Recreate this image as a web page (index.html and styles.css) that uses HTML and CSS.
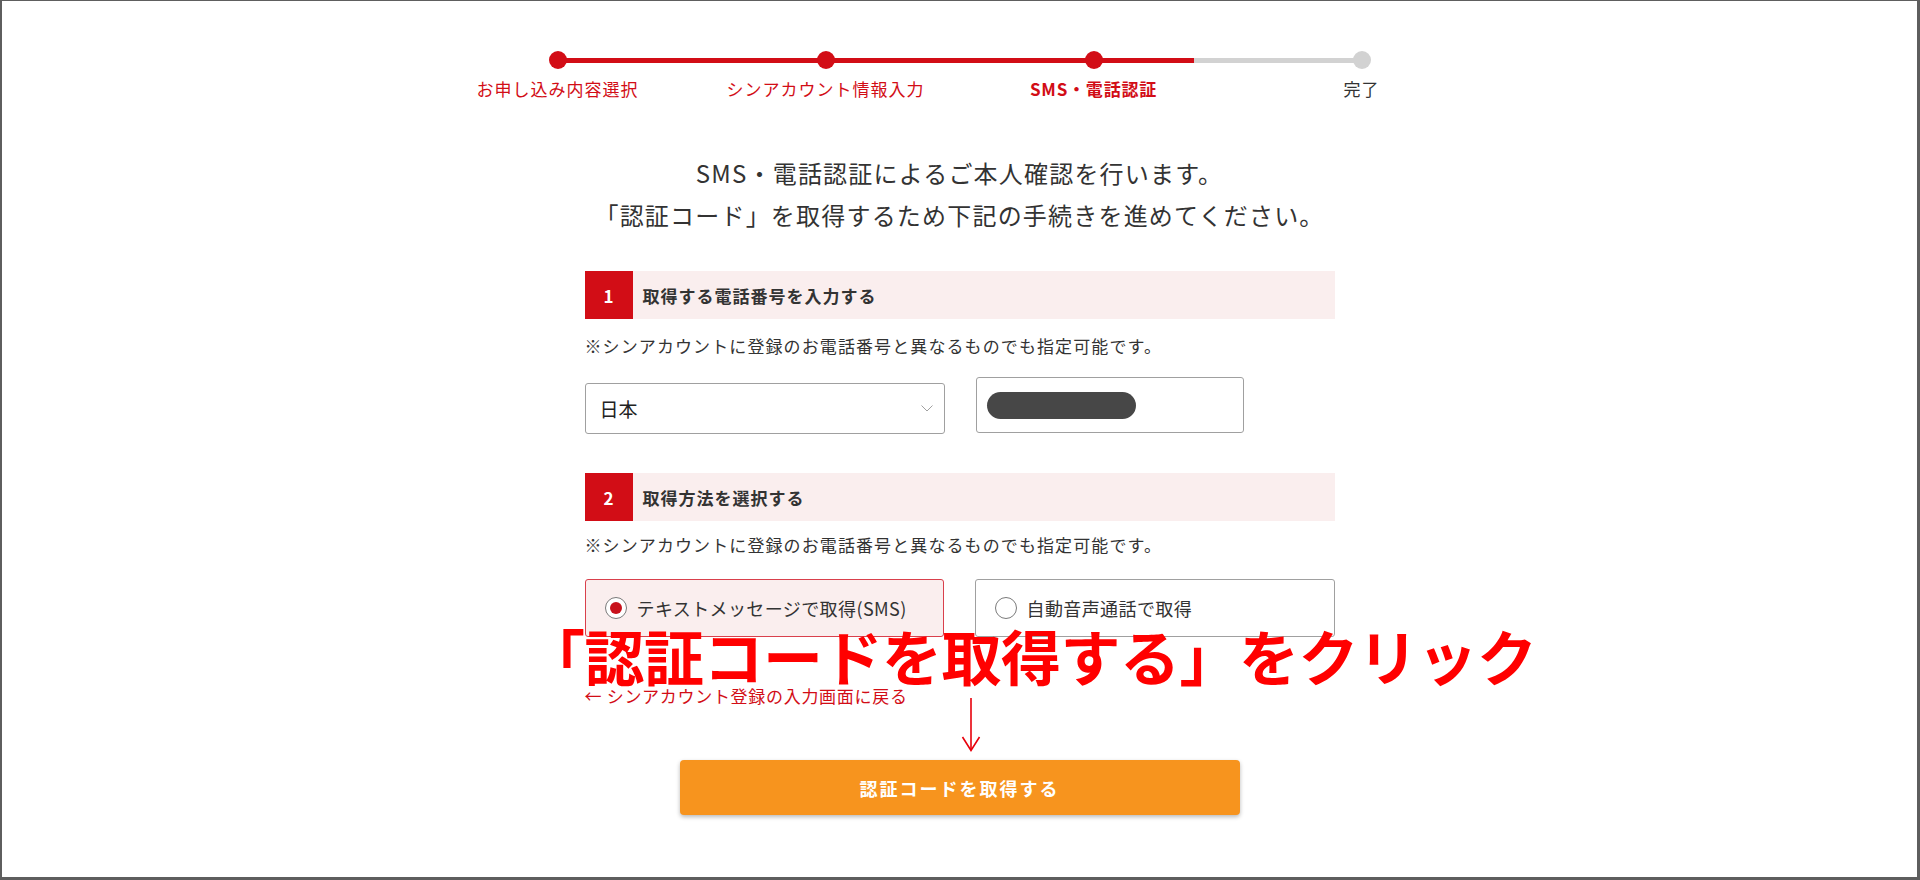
FILE: index.html
```html
<!DOCTYPE html>
<html lang="ja">
<head>
<meta charset="utf-8">
<title>SMS・電話認証</title>
<link rel="stylesheet" href="styles.css">
</head>
<body>
<div class="page">
  <div class="stepper">
    <div class="track"><div class="fill"></div></div>
    <div class="step done">
      <span class="dot"></span>
      <span class="label">お申し込み内容選択</span>
    </div>
    <div class="step done">
      <span class="dot"></span>
      <span class="label">シンアカウント情報入力</span>
    </div>
    <div class="step current">
      <span class="dot"></span>
      <span class="label">SMS・電話認証</span>
    </div>
    <div class="step todo">
      <span class="dot"></span>
      <span class="label">完了</span>
    </div>
  </div>

  <p class="intro">SMS・電話認証によるご本人確認を行います。<br>「認証コード」を取得するため下記の手続きを進めてください。</p>

  <div class="content">
    <div class="sec-head">
      <span class="num">1</span>
      <span class="title">取得する電話番号を入力する</span>
    </div>
    <p class="note">※シンアカウントに登録のお電話番号と異なるものでも指定可能です。</p>
    <div class="fields">
      <div class="select">
        <span>日本</span>
        <svg class="chev" width="12" height="7" viewBox="0 0 12 7"><polyline points="0.5,0.5 6,6 11.5,0.5" fill="none" stroke="#a0a0a0" stroke-width="1"/></svg>
      </div>
      <div class="phone"><span class="pill"></span></div>
    </div>

    <div class="sec-head sec2">
      <span class="num">2</span>
      <span class="title">取得方法を選択する</span>
    </div>
    <p class="note note2">※シンアカウントに登録のお電話番号と異なるものでも指定可能です。</p>
    <div class="radios">
      <label class="radio selected"><span class="circle"><span class="inner"></span></span><span class="rtext">テキストメッセージで取得(SMS)</span></label>
      <label class="radio wide"><span class="circle"></span><span class="rtext">自動音声通話で取得</span></label>
    </div>

    <a class="back">← シンアカウント登録の入力画面に戻る</a>

    <div class="btn">認証コードを取得する</div>
  </div>

  <div class="annot">「認証コードを取得する」をクリック</div>
  <svg class="arrow" width="20" height="54" viewBox="0 0 20 54"><line x1="10" y1="0" x2="10" y2="52" stroke="#e8000b" stroke-width="1.6"/><polyline points="1.5,39 10,52.5 18.5,39" fill="none" stroke="#e8000b" stroke-width="1.6"/></svg>
</div>
</body>
</html>
```

FILE: styles.css
```css
html, body {
  margin: 0;
  padding: 0;
  background: #fff;
}

.page {
  position: relative;
  width: 1920px;
  height: 880px;
  box-sizing: border-box;
  border-style: solid;
  border-color: #5e5e5e;
  border-width: 1px 3px 3px 2px;
  font-family: "Noto Sans CJK JP", "Noto Sans", sans-serif;
  color: #333;
  overflow: hidden;
}

/* stepper */
.stepper {
  position: relative;
  width: 1072px;
  margin: 50px auto 0;
  display: grid;
  grid-template-columns: repeat(4, 268px);
}

.track {
  position: absolute;
  top: 7px;
  left: 134px;
  right: 134px;
  height: 5px;
  background: #d2d2d2;
}

.fill {
  width: 636px;
  height: 100%;
  background: #d20d16;
}

.step {
  display: flex;
  flex-direction: column;
  align-items: center;
}

.dot {
  position: relative;
  z-index: 1;
  width: 18px;
  height: 18px;
  border-radius: 50%;
  background: #d20d16;
}

.todo .dot {
  background: #d2d2d2;
}

.label {
  margin-top: 8px;
  font-size: 17px;
  line-height: 24px;
  letter-spacing: 1px;
  color: #d20d16;
}

.current .label {
  font-weight: 700;
  letter-spacing: 0.8px;
}

.todo .label {
  color: #333;
}

/* intro */
.intro {
  margin: 51px 0 0;
  text-align: center;
  font-size: 24px;
  line-height: 42px;
  letter-spacing: 1.2px;
  color: #333;
}

/* content */
.content {
  width: 750px;
  margin: 0 auto;
  display: flex;
  flex-direction: column;
}

.sec-head {
  margin-top: 35px;
  height: 48px;
  display: flex;
  align-items: center;
  background: #faeeee;
}

.sec2 {
  margin-top: 39px;
}

.num {
  width: 48px;
  height: 48px;
  display: flex;
  align-items: center;
  justify-content: center;
  background: #d20d16;
  color: #fff;
  font-weight: 700;
  font-size: 17px;
}

.title {
  margin-left: 10px;
  font-size: 17px;
  font-weight: 700;
  letter-spacing: 1px;
  color: #333;
}

.note {
  margin: 15px 0 0;
  font-size: 17px;
  line-height: 24px;
  letter-spacing: 1.1px;
  color: #333;
}

.note2 {
  margin-top: 12px;
}

.fields {
  margin-top: 19px;
  display: flex;
  align-items: flex-start;
  gap: 31px;
}

.select {
  margin-top: 6px;
  width: 360px;
  height: 51px;
  box-sizing: border-box;
  border: 1px solid #a0a0a0;
  border-radius: 3px;
  padding: 0 11px 0 14px;
  display: flex;
  align-items: center;
  justify-content: space-between;
  font-size: 19px;
  color: #222;
}

.phone {
  width: 268px;
  height: 56px;
  box-sizing: border-box;
  border: 1px solid #a0a0a0;
  border-radius: 3px;
  padding: 0 10px;
  display: flex;
  align-items: center;
}

.pill {
  width: 149px;
  height: 27px;
  border-radius: 14px;
  background: #474747;
}

.radios {
  margin-top: 22px;
  display: flex;
  gap: 31px;
}

.radio {
  width: 359px;
  height: 58px;
  box-sizing: border-box;
  border: 1px solid #a0a0a0;
  border-radius: 3px;
  padding: 0 19px;
  display: flex;
  align-items: center;
  gap: 10px;
  font-size: 18px;
  line-height: 22px;
  letter-spacing: 0.4px;
  color: #333;
}

.radio.wide {
  width: 360px;
}

.radio.selected {
  border-color: #d9404c;
  background: #faeeee;
}

.circle {
  width: 22px;
  height: 22px;
  box-sizing: border-box;
  border: 1.5px solid #7a7a7a;
  border-radius: 50%;
  background: #fff;
  display: flex;
  align-items: center;
  justify-content: center;
}

.inner {
  width: 12px;
  height: 12px;
  border-radius: 50%;
  background: #c8121c;
}

.back {
  margin-top: 49px;
  font-size: 17px;
  line-height: 20px;
  letter-spacing: 0.7px;
  color: #d20d16;
  align-self: flex-start;
}

.btn {
  margin: 54px auto 0;
  width: 560px;
  height: 55px;
  border-radius: 4px;
  background: #f7941e;
  box-shadow: 0 2px 4px rgba(0, 0, 0, 0.28);
  display: flex;
  align-items: center;
  justify-content: center;
  color: #fff;
  font-size: 18px;
  font-weight: 700;
  letter-spacing: 2px;
}

/* annotation overlay */
.annot {
  position: absolute;
  left: 523px;
  top: 627px;
  font-size: 60px;
  line-height: 54px;
  font-weight: 700;
  letter-spacing: -0.5px;
  color: #ff0000;
  white-space: nowrap;
}

.arrow {
  position: absolute;
  left: 959px;
  top: 697px;
}
```
